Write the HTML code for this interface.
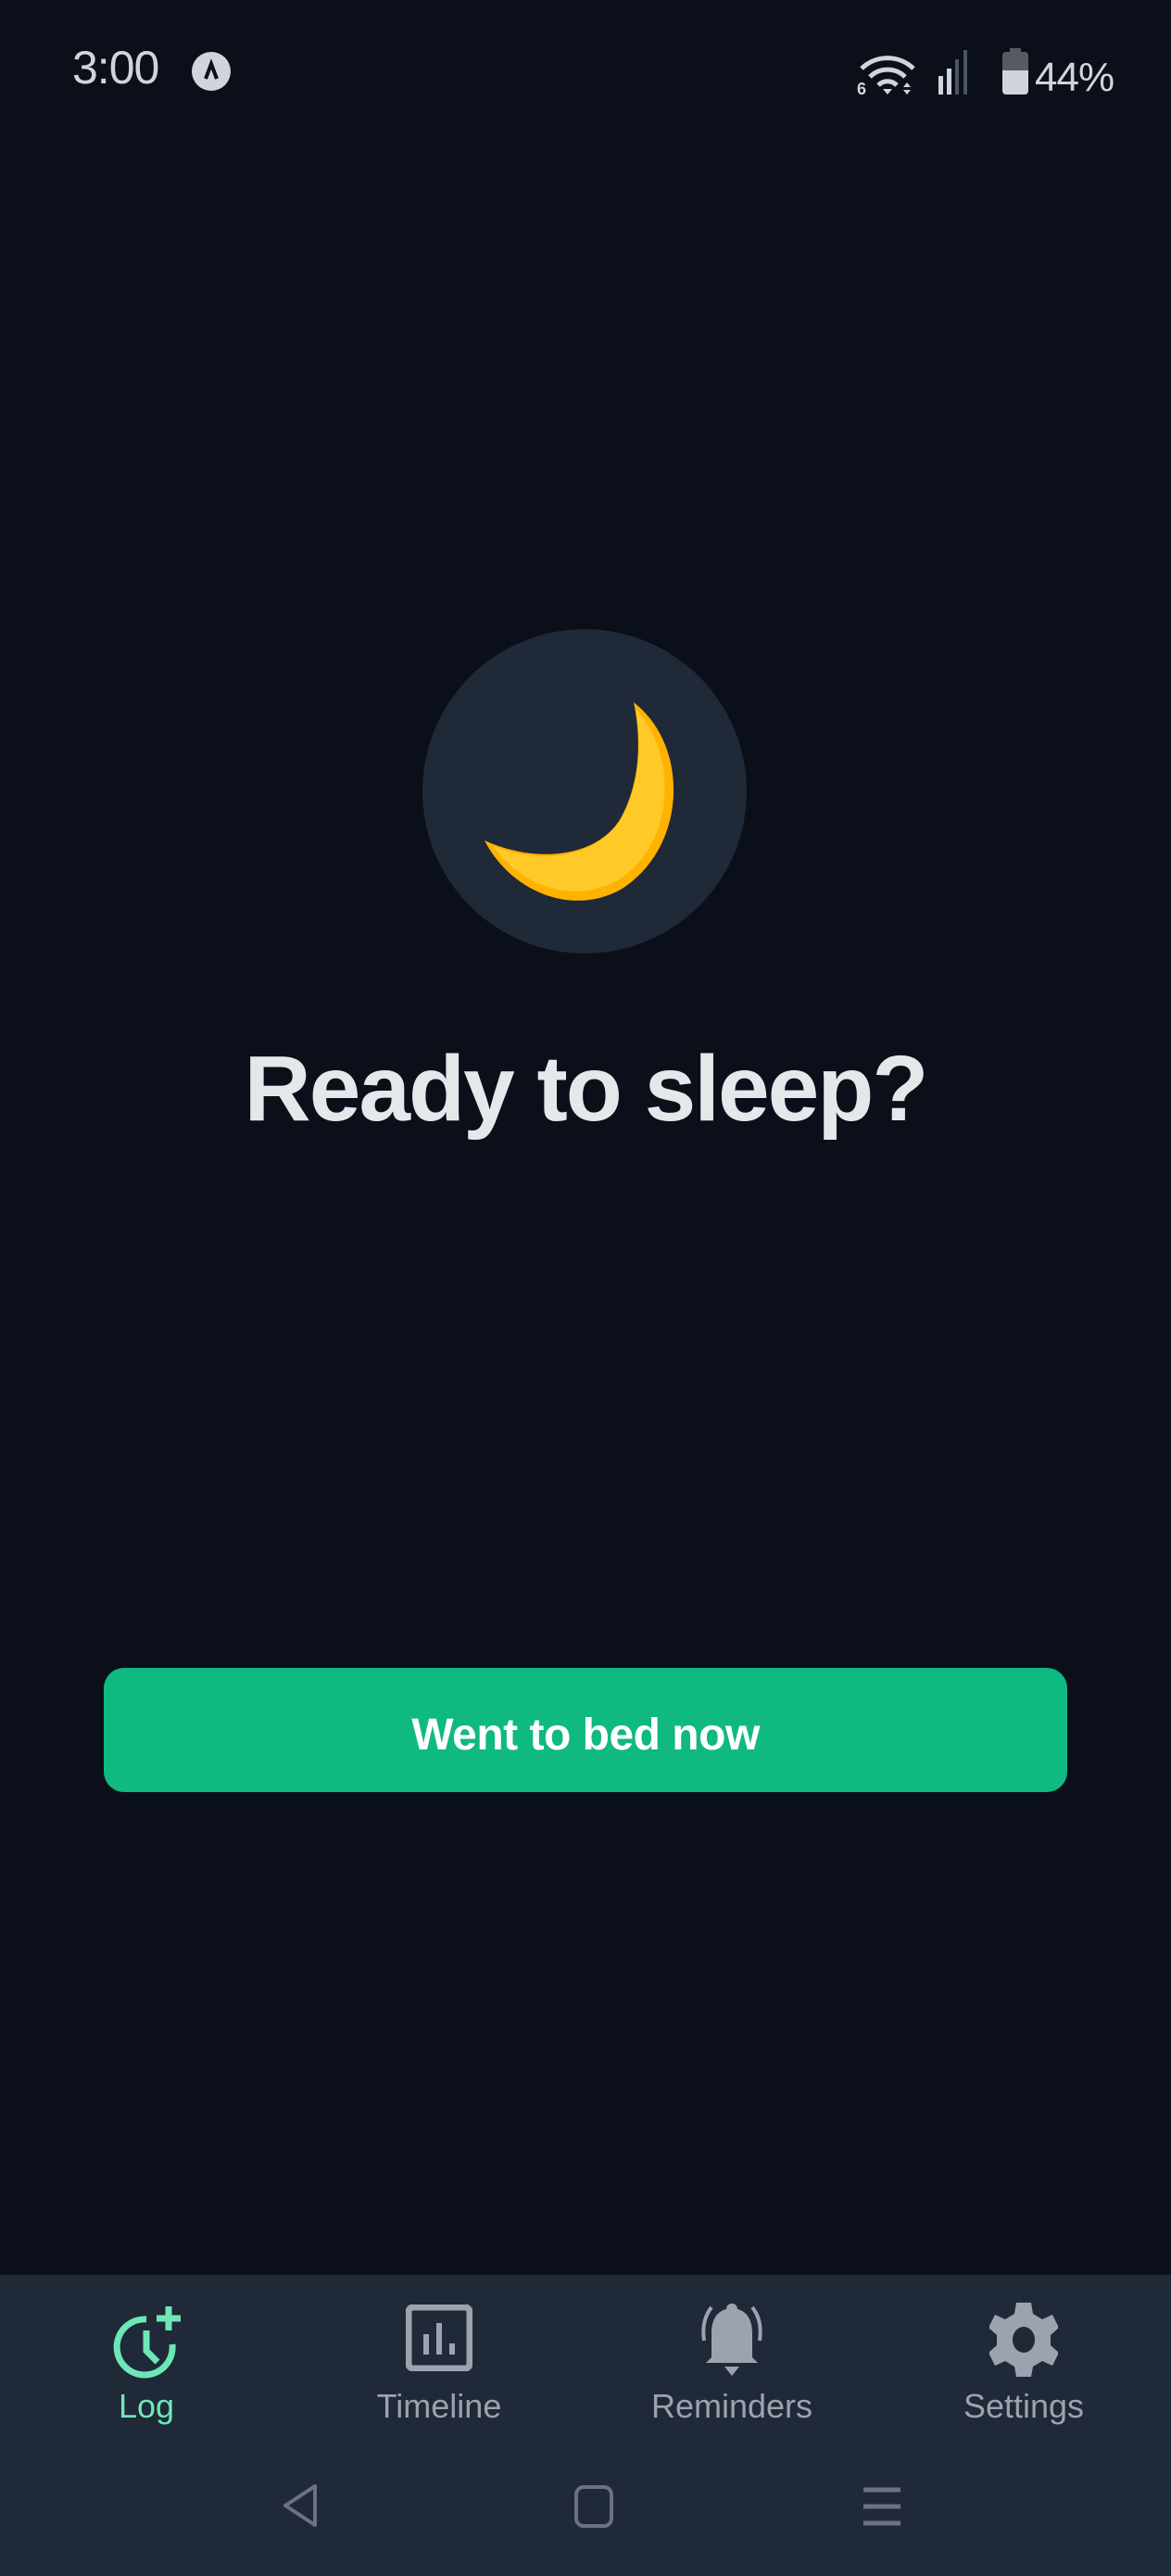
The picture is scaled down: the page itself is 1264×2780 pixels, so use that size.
<!DOCTYPE html>
<html><head><meta charset="utf-8"><style>
*{margin:0;padding:0;box-sizing:border-box}
body{width:1264px;height:2780px;background:#0b0f19;font-family:"Liberation Sans",sans-serif;position:relative;overflow:hidden;color:#e5e7eb}
.abs{position:absolute}
.time{left:78px;top:44px;font-size:50px;color:#d1d5db;letter-spacing:-1px}
.circle{left:456px;top:679px;width:350px;height:350px;border-radius:50%;background:#1f2937}
h1{position:absolute;left:0;width:1264px;top:1118px;text-align:center;font-size:100px;font-weight:bold;letter-spacing:-2px;color:#e5e7eb}
.btn{left:112px;top:1800px;width:1040px;height:134px;border-radius:22px;background:#10b981;color:#fff;font-weight:bold;font-size:48px;text-align:center;line-height:146px;letter-spacing:-0.5px}
.nav{left:0;top:2455px;width:1264px;height:325px;background:#1f2937}
.lab{position:absolute;top:2576px;width:300px;text-align:center;font-size:36px;color:#9ca3af}
</style></head><body>
<div class="abs time">3:00</div>
<svg class="abs" style="left:206px;top:55px" width="44" height="44" viewBox="0 0 44 44"><circle cx="22" cy="22" r="21" fill="#d1d5db"/><path d="M16 30 L22 14 L28 30" stroke="#0b0f19" stroke-width="4" fill="none"/></svg>
<svg class="abs" style="left:925px;top:52px" width="280" height="50" viewBox="0 0 280 50">
<g fill="none" stroke="#d1d5db" stroke-width="5"><path d="M5 22 A40 40 0 0 1 61 22"/><path d="M14 31 A27 27 0 0 1 52 31"/><path d="M23 40 A14 14 0 0 1 43 40"/></g>
<path d="M28 44 L38 44 L33 50 Z" fill="#d1d5db"/><text x="0" y="50" font-size="18" fill="#d1d5db" font-weight="bold" font-family="Liberation Sans">6</text>
<path d="M50 42 l4 -5 l4 5z M50 45 l4 5 l4 -5z" fill="#d1d5db"/>
<rect x="88" y="30" width="5" height="20" fill="#d1d5db"/><rect x="97" y="22" width="5" height="28" fill="#d1d5db"/><rect x="106" y="12" width="4" height="38" fill="#4b5563"/><rect x="115" y="2" width="4" height="48" fill="#4b5563"/>
<rect x="157" y="4" width="28" height="46" rx="4" fill="#565a63"/><rect x="165" y="0" width="12" height="6" fill="#565a63"/><path d="M157 24 h28 v22 a4 4 0 0 1 -4 4 h-20 a4 4 0 0 1 -4 -4z" fill="#d1d5db"/>
<text x="192" y="46" font-size="44" fill="#d1d5db" font-family="Liberation Sans" letter-spacing="-1">44%</text></svg>
<div class="abs circle"></div>
<svg class="abs" style="left:520px;top:755px" width="230" height="220" viewBox="0 0 230 220">
<path d="M164 3 C225 50 222 160 150 205 C95 235 30 205 3 152 C60 178 125 170 150 128 C172 88 172 40 164 3 Z" fill="#ffb300"/>
<path d="M166 10 C212 58 210 158 145 196 C95 222 40 198 12 158 C65 180 128 170 152 126 C172 88 172 45 166 10 Z" fill="#ffca28"/></svg>
<h1>Ready to sleep?</h1>
<div class="abs btn">Went to bed now</div>
<div class="abs nav"></div>
<svg class="abs" style="left:118px;top:2485px" width="82" height="82" viewBox="0 0 82 82"><g fill="none" stroke="#6ee7b7" stroke-width="7"><path d="M68 45 A30 30 0 1 1 40 18"/><path d="M40 30 V52 L52 64"/><path d="M64 4 V30 M51 17 H77"/></g></svg>
<svg class="abs" style="left:438px;top:2487px" width="72" height="72" viewBox="0 0 72 72"><rect x="3" y="3" width="66" height="66" rx="5" fill="none" stroke="#9ca3af" stroke-width="7"/><path d="M22 54V32M36 54V20M50 54V42" stroke="#9ca3af" stroke-width="6"/></svg>
<svg class="abs" style="left:752px;top:2484px" width="76" height="80" viewBox="0 0 76 80"><path d="M38 2 c4 0 6 3 6 6 c12 3 16 14 16 26 v26 l6 6 h-56 l6 -6 v-26 c0 -12 4 -23 16 -26 c0 -3 2 -6 6 -6z M30 70 h16 l-8 10z" fill="#9ca3af"/><path d="M8 42 C6 28 8 16 16 6 M68 42 C70 28 68 16 60 6" stroke="#9ca3af" stroke-width="4" fill="none"/></svg>
<svg class="abs" style="left:1068px;top:2485px" width="74" height="80" viewBox="0 0 74 80"><path d="M29 0h16l2 12 10 6 11-5 7 14-9 8v11l9 8-7 14-11-5-10 6-2 11H29l-2-11-10-6-11 5-7-14 9-8V35L-1 27l7-14 11 5 10-6z" fill="#9ca3af"/><ellipse cx="37" cy="40" rx="12" ry="14" fill="#1f2937"/></svg>
<div class="lab" style="left:8px;color:#6ee7b7">Log</div>
<div class="lab" style="left:324px">Timeline</div>
<div class="lab" style="left:640px">Reminders</div>
<div class="lab" style="left:955px">Settings</div>
<svg class="abs" style="left:302px;top:2680px" width="44" height="48" viewBox="0 0 44 48"><path d="M38 3 L6 24 L38 45 Z" fill="none" stroke="#6b7280" stroke-width="4" stroke-linejoin="round"/></svg>
<svg class="abs" style="left:620px;top:2682px" width="42" height="46" viewBox="0 0 42 46"><rect x="2" y="2" width="38" height="42" rx="8" fill="none" stroke="#6b7280" stroke-width="4"/></svg>
<svg class="abs" style="left:930px;top:2684px" width="44" height="42" viewBox="0 0 44 42"><path d="M2 3h40M2 21h40M2 39h40" stroke="#6b7280" stroke-width="5"/></svg>
</body></html>
